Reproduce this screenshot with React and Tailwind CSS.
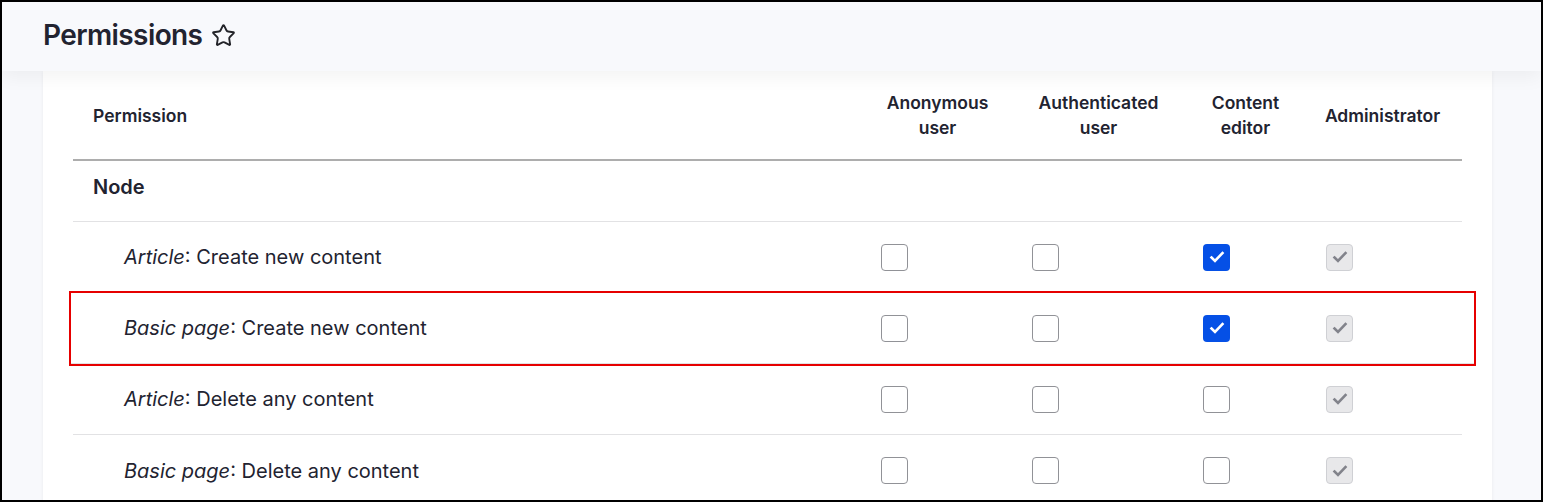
import { Star } from "lucide-react";

const roles = [
  { label: ["Anonymous", "user"], width: "w-[151px]" },
  { label: ["Authenticated", "user"], width: "w-[171px]" },
  { label: ["Content", "editor"], width: "w-[123px]" },
  { label: ["Administrator"], width: "w-[151px]" },
];

const rows = [
  { type: "Article", action: "Create new content", checks: [false, false, true, true], highlight: false },
  { type: "Basic page", action: "Create new content", checks: [false, false, true, true], highlight: true },
  { type: "Article", action: "Delete any content", checks: [false, false, false, true], highlight: false },
  { type: "Basic page", action: "Delete any content", checks: [false, false, false, true], highlight: false },
];

const CheckMark = ({ color }) => (
  <svg width="16" height="16" viewBox="0 0 16 16" fill="none">
    <path d="M2.5 8.5l3.5 3.5 7.5-8" stroke={color} strokeWidth="2.6" strokeLinecap="square" />
  </svg>
);

const Box = ({ checked, disabled }) => {
  if (disabled) {
    return (
      <span className="flex h-[27px] w-[27px] items-center justify-center rounded-[4px] border border-[#cfd0d4] bg-[#e8e8ea]">
        <CheckMark color="#82838b" />
      </span>
    );
  }
  if (checked) {
    return (
      <span className="flex h-[27px] w-[27px] items-center justify-center rounded-[4px] bg-[#0550e6]">
        <CheckMark color="#ffffff" />
      </span>
    );
  }
  return <span className="block h-[27px] w-[27px] rounded-[4px] border border-[#919297] bg-white" />;
};

const App = () => {
  return (
    <div className="box-border h-[502px] w-[1543px] overflow-hidden border-2 border-black bg-[#f8f9fc] font-['Inter',sans-serif] text-[#222330]">
      <div className="relative z-10 h-[69px] bg-[#f8f9fc] pl-[41px] pt-[12px] shadow-[0_6px_18px_rgba(0,0,0,0.05)]">
        <h1 className="flex items-center gap-[9px] text-[28px] font-semibold tracking-[-0.6px]">
          Permissions
          <Star size={25} strokeWidth={1.8} className="mt-[1px] text-[#232429]" />
        </h1>
      </div>

      <div className="ml-[41px] w-[1449px] bg-white px-[30px] shadow-[0_0_4px_rgba(0,0,0,0.06)]">
        <div className="flex h-[90px] items-center border-b-2 border-[#adadad] text-[17.5px] font-semibold leading-[25px]">
          <div className="flex-1 pl-[20px]">Permission</div>
          {roles.map((r) => (
            <div key={r.label[0]} className={`${r.width} pr-[8px] text-center`}>
              {r.label.map((l) => (
                <div key={l}>{l}</div>
              ))}
            </div>
          ))}
        </div>

        <div className="flex h-[61px] items-center border-b border-[#e2e2e4] pb-[8px] pl-[20px] text-[20px] font-semibold">
          Node
        </div>

        {rows.map((row, i) => (
          <div
            key={i}
            className={`flex h-[71px] items-center ${i < rows.length - 1 ? "border-b border-[#e2e2e4]" : ""} ${
              row.highlight ? "-ml-[2px] -mr-[12px] pl-[2px] pr-[12px] outline-2 outline-[#e60000]" : ""
            }`}
          >
            <div className="flex-1 pl-[51px] text-[20px]">
              <em>{row.type}</em>: {row.action}
            </div>
            {roles.map((r, j) => (
              <div key={j} className={`${r.width} pl-[15px]`}>
                <Box checked={row.checks[j]} disabled={j === 3} />
              </div>
            ))}
          </div>
        ))}
      </div>
    </div>
  );
};

export default App;
